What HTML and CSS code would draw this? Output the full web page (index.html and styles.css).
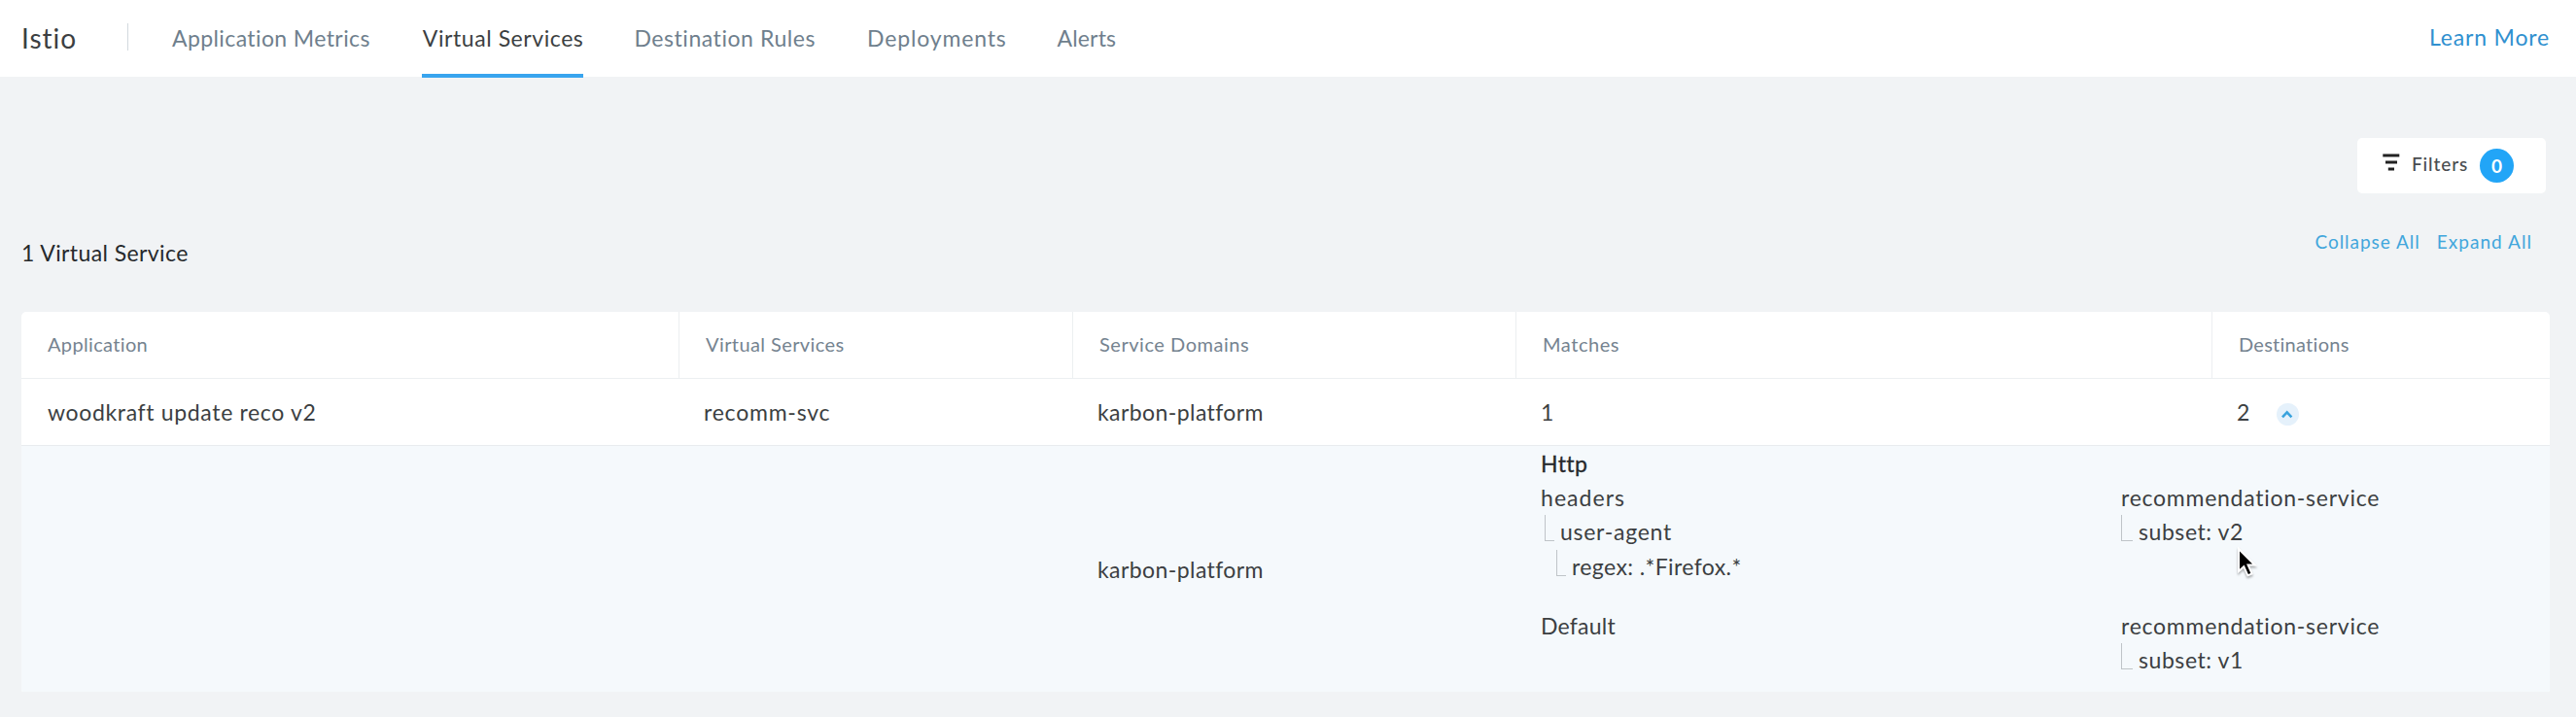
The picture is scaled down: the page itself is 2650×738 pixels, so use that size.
FILE: index.html
```html
<!DOCTYPE html>
<html lang="en">
<head>
<meta charset="utf-8">
<title>Istio</title>
<link rel="stylesheet" href="styles.css">
</head>
<body>
<header class="topbar">
  <div class="brand">Istio</div>
  <nav class="tabs">
    <a class="tab tab-metrics">Application Metrics</a>
    <a class="tab tab-services active">Virtual Services</a>
    <a class="tab tab-rules">Destination Rules</a>
    <a class="tab tab-deploy">Deployments</a>
    <a class="tab tab-alerts">Alerts</a>
  </nav>
  <a class="learn">Learn More</a>
</header>
<main class="page">
  <div class="toolbar">
    <button class="filters">
      <svg class="filter-icon" width="18" height="18" viewBox="0 0 18 18"><path d="M0.3 2h17M3 9h12M5.8 16h6.2" stroke="#222" stroke-width="3" fill="none"/></svg>
      <span class="filters-label">Filters</span>
      <span class="badge">0</span>
    </button>
  </div>
  <div class="summary">
    <h1 class="count">1 Virtual Service</h1>
    <div class="actions"><a class="collapse">Collapse All</a><a class="expand">Expand All</a></div>
  </div>
  <section class="table">
    <div class="row head">
      <div class="cell h-app">Application</div>
      <div class="cell h-vs">Virtual Services</div>
      <div class="cell h-sd">Service Domains</div>
      <div class="cell h-match">Matches</div>
      <div class="cell h-dest">Destinations</div>
    </div>
    <div class="row body">
      <div class="cell b-app">woodkraft update reco v2</div>
      <div class="cell b-vs">recomm-svc</div>
      <div class="cell karbon">karbon-platform</div>
      <div class="cell">1</div>
      <div class="cell">2<span class="toggle"><svg width="23" height="23" viewBox="0 0 23 23"><path d="M6 14.3 L10.7 9.3 L15.4 14.3" fill="none" stroke="#3aa3dd" stroke-width="2.6"/></svg></span></div>
    </div>
    <div class="detail">
      <div class="domain karbon">karbon-platform</div>
      <div class="rules">
        <div class="line http">Http</div>
        <div class="rule">
          <div class="match">
            <div class="line headers">headers</div>
            <div class="line branch agent">user-agent</div>
            <div class="line branch regex">regex: .*Firefox.*</div>
          </div>
          <div class="target">
            <div class="line service">recommendation-service</div>
            <div class="line branch subset">subset: v2</div>
          </div>
        </div>
        <div class="rule">
          <div class="match"><div class="line default">Default</div></div>
          <div class="target">
            <div class="line service">recommendation-service</div>
            <div class="line branch subset">subset: v1</div>
          </div>
        </div>
      </div>
    </div>
  </section>
</main>
<svg class="cursor" width="28" height="36" viewBox="0 0 28 36"><path d="M4 3V26L9.3 21.2L13.4 30.3L17.6 28.4L13.6 19.6H20.6Z" fill="#000" stroke="#fff" stroke-width="2"/></svg>
</body>
</html>
```
FILE: styles.css
```css
* { box-sizing: border-box; }
body {
  margin: 0;
  height: 738px;
  overflow: hidden;
  background: #f1f3f5;
  font-family: Lato, "Liberation Sans", sans-serif;
  font-size: 23px;
  color: #3c3f42;
}
.topbar {
  display: flex;
  align-items: center;
  height: 79px;
  padding: 0 27px 0 22px;
  background: #fff;
}
.brand {
  display: flex;
  align-items: center;
  width: 110px;
  height: 28px;
  margin-top: -4px;
  padding-top: 2px;
  border-right: 1px solid #d3d9de;
  font-size: 28px;
  letter-spacing: 1px;
}
.tabs { display: flex; gap: 52px; height: 79px; margin-left: 46px; }
.tab {
  display: flex;
  align-items: center;
  position: relative;
  padding-bottom: 2px;
  color: #6f7f8d;
  white-space: nowrap;
}
.tab-metrics { letter-spacing: 0.4px; margin: 0 2px 0 -1px; }
.tab-services { letter-spacing: 0.57px; }
.tab-rules { letter-spacing: 0.56px; margin-right: 1px; }
.tab-deploy { letter-spacing: 0.84px; }
.tab-alerts { letter-spacing: 0.15px; }
.tab.active { color: #3c3f42; }
.tab.active::after {
  content: "";
  position: absolute;
  right: 0;
  bottom: -1px;
  left: -1px;
  height: 4px;
  background: #38a4ee;
}
.learn { margin-left: auto; padding-bottom: 4px; color: #3090cf; letter-spacing: 0.82px; }
.page { padding: 63px 27px 26px 22px; }
.toolbar { display: flex; justify-content: flex-end; padding-right: 4px; }
.filters {
  display: flex;
  align-items: center;
  width: 194px;
  height: 57px;
  padding: 0 0 0 26px;
  border: 0;
  border-radius: 5px;
  background: #fff;
  font: 500 19px Lato, sans-serif;
  color: #4a4d50;
}
.filter-icon { margin-bottom: 7px; }
.filters-label { width: 70px; margin-left: 12px; padding-bottom: 4px; text-align: left; letter-spacing: 0.88px; }
.badge {
  display: flex;
  align-items: center;
  justify-content: center;
  width: 35px;
  height: 35px;
  border-radius: 50%;
  background: #22a5f7;
  color: #fff;
  font-size: 19px;
  font-weight: 700;
}
.summary { display: flex; justify-content: space-between; height: 122px; padding: 31px 18px 0 0; }
.count {
  height: 28px;
  margin: 16px 0 0;
  font-size: 23px;
  font-weight: 400;
  line-height: 28px;
  letter-spacing: 0.4px;
  color: #26292c;
}
.actions { display: flex; gap: 17px; height: 24px; margin-top: 7px; font-size: 19px; line-height: 24px; color: #41a6dc; }
.collapse { letter-spacing: 0.97px; }
.expand { letter-spacing: 1.05px; }
.table { overflow: hidden; border-radius: 5px 5px 2px 2px; background: #fff; }
.row { display: grid; grid-template-columns: 676px 405px 456px 716px 1fr; }
.cell { display: flex; align-items: center; padding-left: 26px; }
.head { height: 69px; border-bottom: 1px solid #eceff1; font-size: 20px; color: #758390; }
.head .cell { padding-bottom: 3px; padding-left: 27px; }
.head .cell + .cell { border-left: 1px solid #eceff1; }
.h-app { letter-spacing: 0.35px; }
.h-vs { letter-spacing: 0.41px; }
.h-sd { letter-spacing: 0.53px; }
.h-match { letter-spacing: 0.56px; }
.h-dest { letter-spacing: 0.27px; }
.body { height: 69px; border-bottom: 1px solid #e9ecef; }
.b-app { padding-left: 27px; letter-spacing: 0.66px; }
.b-vs { letter-spacing: 0.77px; }
.karbon { letter-spacing: 0.42px; }
.toggle { width: 23px; height: 23px; margin: 4px 0 0 28px; border-radius: 50%; background: #e5f1fb; }
.toggle svg { display: block; }
.detail {
  display: grid;
  grid-template-columns: 456px 1fr;
  height: 253px;
  padding-left: 1107px;
  background: #f5f9fc;
}
.domain { align-self: center; }
.rules { padding-top: 1px; }
.line { height: 35.2px; line-height: 35.2px; white-space: nowrap; }
.rule { display: grid; grid-template-columns: 597px 1fr; }
.rule + .rule { margin-top: 26px; }
.http { letter-spacing: 0.4px; color: #26292c; -webkit-text-stroke: 0.3px; }
.headers { letter-spacing: 1.05px; }
.agent { margin-left: 4px; letter-spacing: 0.73px; }
.regex { margin-left: 16px; letter-spacing: 0.4px; }
.default { letter-spacing: 0.24px; }
.service { letter-spacing: 0.74px; }
.subset { letter-spacing: 0.57px; }
.branch { display: flex; }
.branch::before {
  content: "";
  width: 9px;
  height: 26px;
  margin-right: 6px;
  border: solid #bfc4c8;
  border-width: 0 0 1px 1px;
}
.subset::before { width: 11px; margin-right: 6px; }
.cursor { position: absolute; left: 2299px; top: 562px; filter: drop-shadow(0 2px 1px rgba(0, 0, 0, 0.3)); }
```
